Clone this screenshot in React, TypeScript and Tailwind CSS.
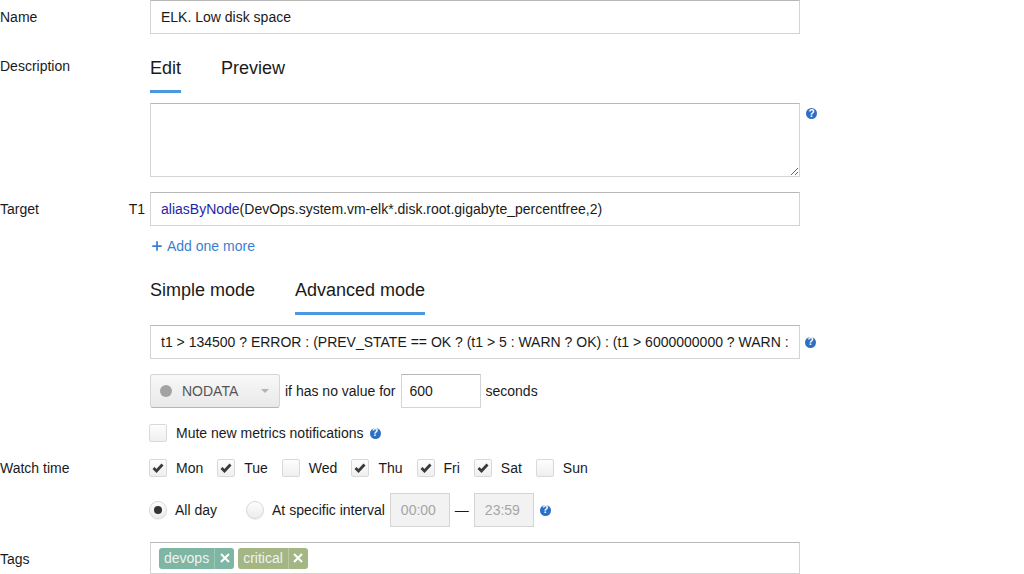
import { Plus } from 'lucide-react';

const inputBox = 'h-[34px] w-[650px] border border-[#d4d4d4] border-t-[#b8b8b8] bg-white px-[10px] text-[14px] leading-[32px] text-[#1a1a1a] outline-none';

function Help({ className = '' }: { className?: string }) {
  return (
    <span className={`flex h-[11px] w-[11px] shrink-0 items-center justify-center rounded-full bg-[#2d6fc4] text-[10px] leading-none font-bold text-white ${className}`}>
      ?
    </span>
  );
}

function Check({ checked, label, gap = 'mr-[20px]' }: { checked: boolean; label: string; gap?: string }) {
  return (
    <label className={`flex items-center ${gap}`}>
      <span className="ml-[-1px] flex h-[18px] w-[18px] items-center justify-center rounded-[2px] border border-[#d9d9d9] bg-gradient-to-b from-[#fdfdfd] to-[#efefef]">
        {checked && (
          <svg width="12" height="10" viewBox="0 0 12 10">
            <path d="M1.5 5 L4.5 8 L10.5 1.5" fill="none" stroke="#3a3a3a" strokeWidth="2.8" />
          </svg>
        )}
      </span>
      <span className="ml-[9px] text-[14px] text-[#1a1a1a]">{label}</span>
    </label>
  );
}

function Radio({ checked, label, className = '' }: { checked: boolean; label: string; className?: string }) {
  return (
    <label className={`flex items-center ${className}`}>
      <span className="ml-[-1px] flex h-[18px] w-[18px] items-center justify-center rounded-full border border-[#d9d9d9] bg-gradient-to-b from-[#fdfdfd] to-[#ececec] shadow-[0_1px_1px_rgba(0,0,0,0.08)]">
        {checked && <span className="h-[8px] w-[8px] rounded-full bg-[#333]" />}
      </span>
      <span className="ml-[8px] text-[14px] text-[#1a1a1a]">{label}</span>
    </label>
  );
}

function Tag({ name, color, line }: { name: string; color: string; line: string }) {
  return (
    <span className={`mr-[4px] flex h-[21px] items-center rounded-[3px] text-[14px] text-[#eef3ee] ${color}`}>
      <span className="px-[5px]">{name}</span>
      <span className={`flex h-full w-[20px] items-center justify-center border-l ${line}`}>
        <svg width="10" height="10" viewBox="0 0 10 10">
          <path d="M1 1 L9 9 M9 1 L1 9" stroke="#fff" strokeWidth="2" />
        </svg>
      </span>
    </span>
  );
}

export default function App() {
  return (
    <div className="h-[574px] w-[1024px] overflow-hidden bg-white font-['Liberation_Sans',Arial,sans-serif] text-[14px] text-[#1a1a1a]">
      <div className="flex">
        <div className="w-[150px] leading-[34px]">Name</div>
        <input className={inputBox} readOnly value="ELK. Low disk space" />
      </div>

      <div className="mt-[17px] flex">
        <div className="w-[150px] leading-[30px]">Description</div>
        <div className="flex gap-[40px] text-[18px]">
          <div className="h-[42px] border-b-[3px] border-[#4a98e0] pt-[5px] leading-[24px]">Edit</div>
          <div className="pt-[5px] leading-[24px]">Preview</div>
        </div>
      </div>

      <div className="mt-[10px] flex">
        <div className="w-[150px]" />
        <textarea readOnly className="h-[74px] w-[650px] border border-[#d4d4d4] border-t-[#b8b8b8] bg-white outline-none" />
        <Help className="mt-[5px] ml-[6px]" />
      </div>

      <div className="mt-[15px] flex">
        <div className="flex w-[150px] justify-between pr-[5px] leading-[34px]">
          <span>Target</span>
          <span>T1</span>
        </div>
        <div className={inputBox}>
          <span className="text-[#1f1fa8]">aliasByNode</span>(DevOps.system.vm-elk*.disk.root.gigabyte_percentfree,2)
        </div>
      </div>

      <div className="mt-[12px] ml-[150px] flex h-[16px] items-center text-[14px] text-[#3a7fcf]">
        <Plus size={14} strokeWidth={3} className="mr-[3px]" />
        Add one more
      </div>

      <div className="mt-[24px] ml-[150px] flex gap-[40px] text-[18px]">
        <div className="h-[37px] leading-[24px]">Simple mode</div>
        <div className="h-[37px] border-b-[3px] border-[#4a98e0] leading-[24px]">Advanced mode</div>
      </div>

      <div className="mt-[10px] ml-[150px] flex items-center">
        <input
          className={inputBox}
          readOnly
          value="t1 > 134500 ? ERROR : (PREV_STATE == OK ? (t1 > 5 : WARN ? OK) : (t1 > 6000000000 ? WARN : OK))"
        />
        <Help className="ml-[5px]" />
      </div>

      <div className="mt-[15px] ml-[150px] flex items-center">
        <div className="flex h-[34px] w-[130px] items-center rounded-[3px] border border-[#d6d6d6] border-b-[#b5b5b5] bg-gradient-to-b from-[#f8f8f8] to-[#e9e9e9] pl-[9px] text-[#555]">
          <span className="h-[12px] w-[12px] rounded-full bg-[#a3a3a3]" />
          <span className="ml-[10px]">NODATA</span>
          <span className="ml-[23px] h-0 w-0 border-x-[4px] border-t-[4px] border-x-transparent border-t-[#b3b3b3]" />
        </div>
        <span className="ml-[5px]">if has no value for</span>
        <input className="ml-[5px] h-[34px] w-[80px] border border-[#d4d4d4] border-t-[#b8b8b8] px-[8px] text-[14px] outline-none" readOnly value="600" />
        <span className="ml-[5px]">seconds</span>
      </div>

      <div className="mt-[16px] ml-[150px] flex h-[18px] items-center">
        <Check checked={false} label="Mute new metrics notifications" gap="mr-[6px]" />
        <Help />
      </div>

      <div className="mt-[17px] flex h-[18px] items-center">
        <div className="w-[150px]">Watch time</div>
        <Check checked label="Mon" gap="mr-[15px]" />
        <Check checked label="Tue" gap="mr-[15px]" />
        <Check checked={false} label="Wed" gap="mr-[15px]" />
        <Check checked label="Thu" gap="mr-[15px]" />
        <Check checked label="Fri" gap="mr-[15px]" />
        <Check checked label="Sat" gap="mr-[15px]" />
        <Check checked={false} label="Sun" />
      </div>

      <div className="mt-[16px] ml-[150px] flex h-[34px] items-center">
        <Radio checked label="All day" className="mr-[30px]" />
        <Radio checked={false} label="At specific interval" />
        <div className="ml-[5px] h-[34px] w-[60px] border border-[#d4d4d4] bg-[#f2f2f2] pl-[10px] leading-[32px] text-[#a6a6a6]">00:00</div>
        <span className="mx-[5px] text-[14px]">—</span>
        <div className="h-[34px] w-[60px] border border-[#d4d4d4] bg-[#f2f2f2] pl-[10px] leading-[32px] text-[#a6a6a6]">23:59</div>
        <Help className="ml-[6px]" />
      </div>

      <div className="mt-[15px] flex">
        <div className="w-[150px] leading-[34px]">Tags</div>
        <div className="flex h-[32px] w-[650px] items-center border border-[#d4d4d4] border-t-[#b8b8b8] pl-[8px]">
          <Tag name="devops" color="bg-[#7fb5a3]" line="border-[#9cc8b9]" />
          <Tag name="critical" color="bg-[#a3b683]" line="border-[#bccb9f]" />
        </div>
      </div>
    </div>
  );
}
